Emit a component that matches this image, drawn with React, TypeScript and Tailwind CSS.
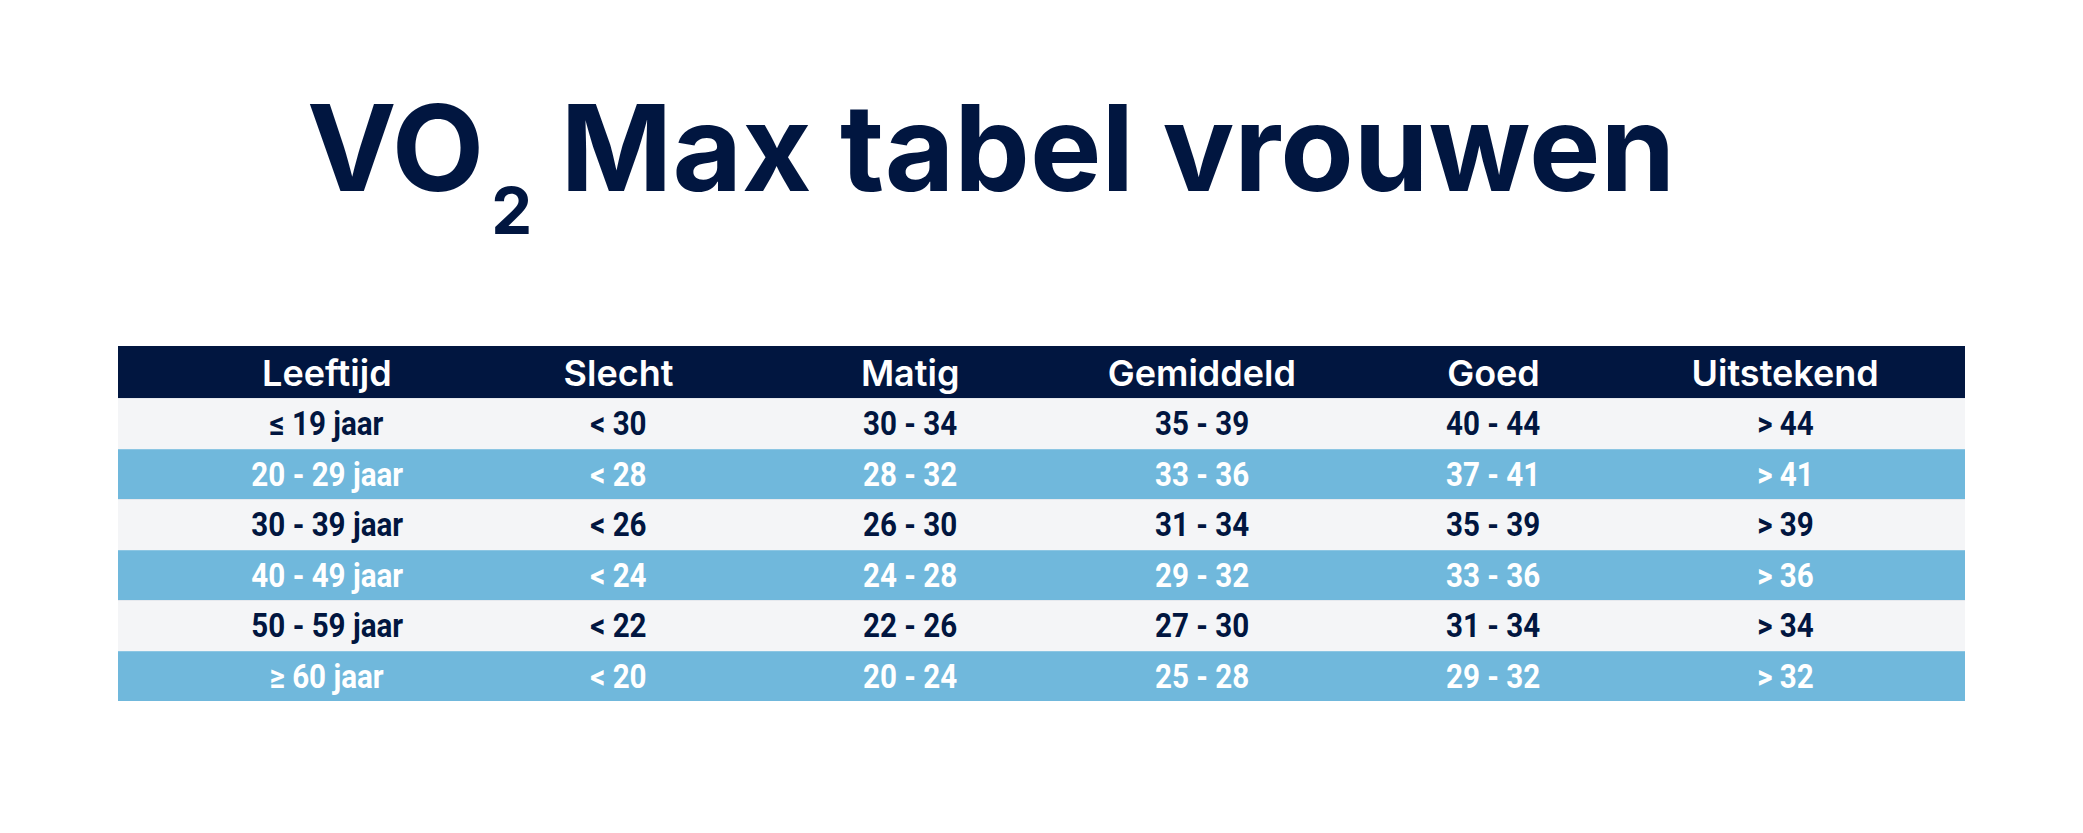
const headers = ["Leeftijd", "Slecht", "Matig", "Gemiddeld", "Goed", "Uitstekend"];

const rows = [
  ["≤ 19 jaar", "< 30", "30 - 34", "35 - 39", "40 - 44", "> 44"],
  ["20 - 29 jaar", "< 28", "28 - 32", "33 - 36", "37 - 41", "> 41"],
  ["30 - 39 jaar", "< 26", "26 - 30", "31 - 34", "35 - 39", "> 39"],
  ["40 - 49 jaar", "< 24", "24 - 28", "29 - 32", "33 - 36", "> 36"],
  ["50 - 59 jaar", "< 22", "22 - 26", "27 - 30", "31 - 34", "> 34"],
  ["≥ 60 jaar", "< 20", "20 - 24", "25 - 28", "29 - 32", "> 32"],
];

export default function App() {
  return (
    <div className="w-[2083px] h-[833px] bg-white flex flex-col font-['Inter',sans-serif]">
      <div className="h-[346px] pt-[88px] pl-[307px]">
        <h1 className="text-[120px] leading-none font-bold text-[#011640] whitespace-nowrap">
          VO<span className="text-[65px] align-[-43px] ml-[7px]">2</span> Max tabel vrouwen
        </h1>
      </div>
      <div className="mx-[118px] w-[1847px]">
        <div className="h-[52px] bg-[#011640] grid grid-cols-6 pl-[63px] pr-[34px] items-center">
          {headers.map((h) => (
            <div key={h} className="text-center text-white text-[36px] font-semibold">
              {h}
            </div>
          ))}
        </div>
        {rows.map((r, i) => (
          <div
            key={i}
            className={
              i % 2 === 0
                ? "h-[50.5px] bg-[#f4f5f7] text-[#011640] grid grid-cols-6 pl-[63px] pr-[34px] items-center border-t border-[#e6e9ee]"
                : "h-[50.5px] bg-[#70b8dc] text-white grid grid-cols-6 pl-[63px] pr-[34px] items-center border-t border-[#8cc6e3]"
            }
          >
            {r.map((c, j) => (
              <div key={j} className="text-center">
                <span className="inline-block scale-x-[0.87] text-[34px] leading-none font-bold font-['Roboto',sans-serif] whitespace-nowrap">
                  {c}
                </span>
              </div>
            ))}
          </div>
        ))}
      </div>
    </div>
  );
}
